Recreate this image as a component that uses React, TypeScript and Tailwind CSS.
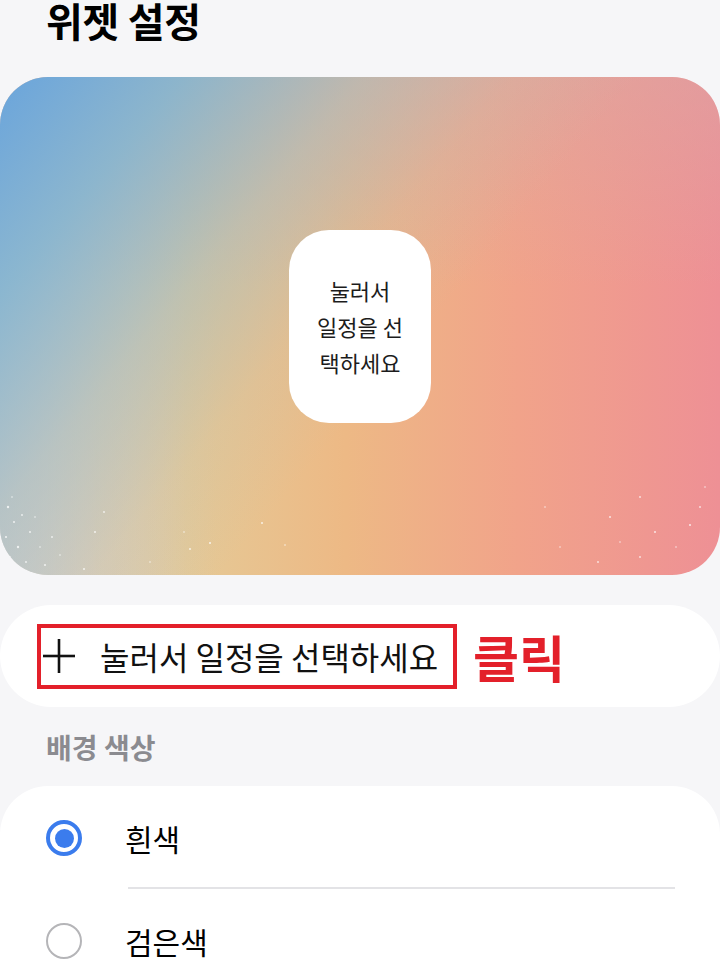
import React from "react";

function Radio({ checked }: { checked: boolean }) {
  return checked ? (
    <div className="w-[36px] h-[36px] rounded-full border-[4px] border-[#3b7ced] flex items-center justify-center shrink-0">
      <div className="w-[19px] h-[19px] rounded-full bg-[#3b7ced]" />
    </div>
  ) : (
    <div className="w-[36px] h-[36px] rounded-full border-[2.5px] border-[#b5b5b8] shrink-0" />
  );
}

const dots: [number, number, number][] = [
  [8, 430, 1.2], [14, 445, 1], [22, 438, 0.9], [6, 460, 1.1], [30, 455, 1], [18, 470, 1.2], [40, 470, 0.8],
  [10, 480, 1], [26, 485, 0.9], [45, 488, 1], [60, 478, 0.8], [35, 440, 0.8], [52, 460, 0.9], [12, 420, 0.8],
  [95, 455, 1], [104, 435, 0.9], [190, 472, 1], [184, 455, 0.8], [210, 466, 1.1], [262, 446, 1],
  [84, 492, 1], [150, 485, 0.8], [285, 468, 0.8], [545, 430, 0.8], [610, 440, 1], [640, 420, 0.9],
  [655, 455, 1], [690, 448, 1.1], [700, 430, 0.9], [676, 470, 0.8], [640, 480, 0.9], [705, 410, 0.8],
  [560, 470, 0.8], [598, 485, 0.9], [620, 465, 0.8],
];

export default function App() {
  return (
    <div
      className="w-[720px] h-[966px] overflow-hidden bg-[#f6f6f8] text-black"
      style={{ fontFamily: '"Noto Sans CJK KR", "Noto Sans", sans-serif' }}
    >
      <div className="h-[77px] pl-[46px]">
        <div className="text-[40px] font-bold leading-[40px] tracking-[-0.3px]">위젯 설정</div>
      </div>

      <div className="relative h-[498px] rounded-[48px] overflow-hidden bg-[linear-gradient(90deg,#dcd7cf_0%,#e5c996_26%,#edb985_48%,#f1a38a_72%,#ee9095_100%)] flex items-center justify-center">
        <div className="absolute inset-0 bg-[linear-gradient(90deg,rgba(196,202,210,0.7)_0%,rgba(200,200,200,0.3)_14%,rgba(200,200,200,0)_30%)]" />
        <div className="absolute inset-0 bg-[linear-gradient(180deg,rgba(214,168,168,0.45)_0%,rgba(214,168,168,0)_42%)]" />
        <div className="absolute inset-0 bg-[linear-gradient(130deg,#6aa5dc_0%,rgba(132,180,208,0.9)_16%,rgba(168,188,190,0.6)_32%,rgba(190,190,175,0.22)_45%,rgba(200,190,170,0)_56%)]" />
        <svg className="absolute inset-0" width="720" height="498" viewBox="0 0 720 498">
          {dots.map(([x, y, r], i) => (
            <circle key={i} cx={x} cy={y} r={r} fill="#ffffff" opacity="0.75" />
          ))}
        </svg>
        <div className="relative w-[142px] h-[193px] rounded-[40px] bg-white flex items-center justify-center">
          <div className="text-[22px] leading-[36px] text-center text-[#1c1c1c]">
            눌러서
            <br />
            일정을 선
            <br />
            택하세요
          </div>
        </div>
      </div>

      <div className="mt-[30px] h-[102px] rounded-full bg-white flex items-center pl-[37px]">
        <div className="w-[420px] h-[65px] border-[4px] border-[#e3202a] flex items-center">
          <svg width="34" height="38" viewBox="0 0 34 38" className="ml-[1px]">
            <line x1="17" y1="2" x2="17" y2="36" stroke="#111" strokeWidth="2.6" />
            <line x1="1" y1="19" x2="33" y2="19" stroke="#111" strokeWidth="2.6" />
          </svg>
          <span className="ml-[24px] text-[32px] leading-none text-[#111] tracking-[0px] whitespace-nowrap">눌러서 일정을 선택하세요</span>
        </div>
        <span className="ml-[16px] text-[50px] font-bold leading-none text-[#e3202a]">클릭</span>
      </div>

      <div className="h-[79px] pl-[46px] flex items-center">
        <span className="text-[28px] font-bold text-[#8b8b90]">배경 색상</span>
      </div>

      <div className="bg-white rounded-t-[48px] pt-[34px]">
        <div className="flex items-center pl-[46px] h-[36px]">
          <Radio checked />
          <span className="ml-[43px] text-[30px] leading-none">흰색</span>
        </div>
        <div className="ml-[128px] mr-[45px] mt-[31px] h-[2px] bg-[#e3e3e6]" />
        <div className="flex items-center pl-[46px] h-[36px] mt-[34px]">
          <Radio checked={false} />
          <span className="ml-[43px] text-[30px] leading-none">검은색</span>
        </div>
        <div className="h-[60px]" />
      </div>
    </div>
  );
}
